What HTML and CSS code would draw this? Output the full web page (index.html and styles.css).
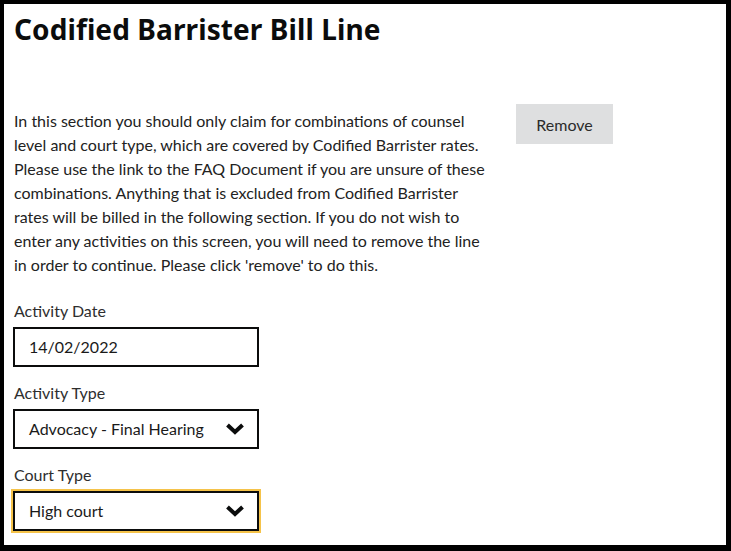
FILE: index.html
```html
<!DOCTYPE html>
<html lang="en">
<head>
<meta charset="utf-8">
<title>Codified Barrister Bill Line</title>
<link rel="stylesheet" href="styles.css">
</head>
<body>
<div class="frame">
  <h1 class="title">Codified Barrister Bill Line</h1>
  <div class="intro">
    <p class="lead">In this section you should only claim for combinations of counsel level and court type, which are covered by Codified Barrister rates. Please use the link to the FAQ Document if you are unsure of these combinations. Anything that is excluded from Codified Barrister rates will be billed in the following section. If you do not wish to enter any activities on this screen, you will need to remove the line in order to continue. Please click 'remove' to do this.</p>
    <button class="btn-remove" type="button">Remove</button>
  </div>
  <div class="field">
    <label class="label">Activity Date</label>
    <div class="control">14/02/2022</div>
  </div>
  <div class="field">
    <label class="label">Activity Type</label>
    <div class="control select">
      <span>Advocacy - Final Hearing</span>
      <svg class="chev" width="20" height="14" viewBox="0 0 20 14"><polyline points="2.5,3 10,10 17.5,3" fill="none" stroke="#0b0c0c" stroke-width="4"/></svg>
    </div>
  </div>
  <div class="field">
    <label class="label">Court Type</label>
    <div class="control select focused">
      <span>High court</span>
      <svg class="chev" width="20" height="14" viewBox="0 0 20 14"><polyline points="2.5,3 10,10 17.5,3" fill="none" stroke="#0b0c0c" stroke-width="4"/></svg>
    </div>
  </div>
</div>
</body>
</html>
```
FILE: styles.css
```css
* { box-sizing: border-box; }
html, body { margin: 0; padding: 0; background: #fff; }
body { font-family: Lato, "Noto Sans", sans-serif; color: #1a1a1a; }
.frame {
  width: 731px;
  height: 551px;
  border-style: solid;
  border-color: #000;
  border-width: 4px 5px 6px 4px;
  padding: 8px 0 0 10px;
  overflow: hidden;
}
.title {
  margin: 0;
  font-family: "Noto Sans", Lato, sans-serif;
  font-size: 28px;
  font-weight: 700;
  line-height: 34px;
  color: #0b0c0c;
  letter-spacing: 0.1px;
}
.intro {
  display: flex;
  align-items: flex-start;
  gap: 28px;
  margin-top: 63px;
}
.lead {
  margin: 0;
  width: 474px;
  font-size: 16px;
  line-height: 24px;
  color: #222;
}
.btn-remove {
  margin-top: -5px;
  width: 97px;
  height: 40px;
  border: none;
  background: #dedfe0;
  font-family: inherit;
  font-size: 16px;
  color: #2b2b2b;
  padding: 0;
}
.field { margin-top: 14px; }
.intro + .field { margin-top: 22px; }
.label {
  display: block;
  font-size: 16px;
  line-height: 24px;
  color: #2e2e2e;
  margin-bottom: 4px;
}
.control {
  width: 246px;
  height: 40px;
  border: 2px solid #0b0c0c;
  padding: 0 12px 0 14px;
  font-size: 16px;
  line-height: 36px;
  color: #1a1a1a;
  display: flex;
  align-items: center;
  justify-content: space-between;
  margin-left: -1px;
}
.focused { box-shadow: 0 0 0 2px #f5c34a; }
.chev { display: block; }
```
